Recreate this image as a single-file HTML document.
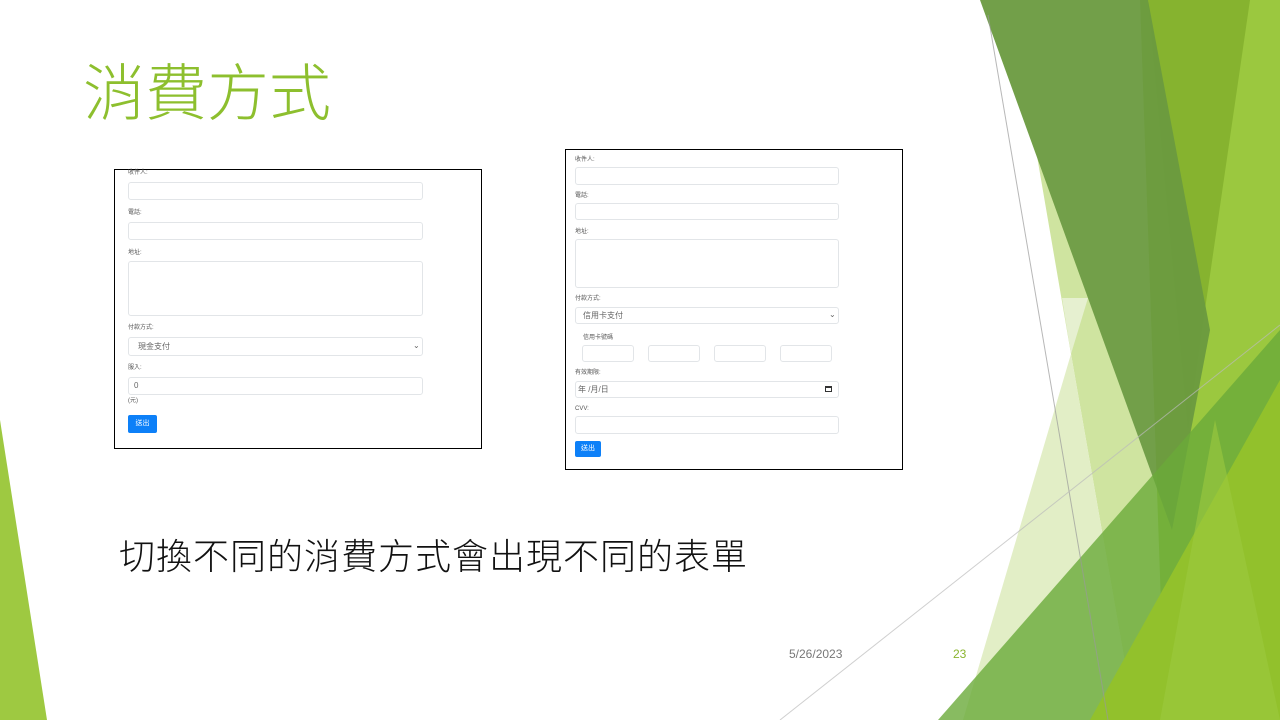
<!DOCTYPE html>
<html><head><meta charset="utf-8"><style>
body{margin:0;width:1280px;height:720px;overflow:hidden;background:#fff;position:relative;font-family:"Liberation Sans","Noto Sans CJK TC",sans-serif}
.a{position:absolute}
.box{position:absolute;border:1px solid #000;background:#fff}
.l{position:absolute;font-size:6px;color:#555;line-height:7px}
.i{position:absolute;border:1px solid #e2e5e8;border-radius:3px;background:#fff;box-sizing:border-box}
.t{position:absolute;font-size:8px;color:#666;line-height:9px}
.b{position:absolute;background:#0d80f8;border-radius:2px;color:#fff;font-size:7px;line-height:18px;text-align:center}
</style></head><body>
<svg class="a" style="left:0;top:0" width="1280" height="720">
<polygon points="0,420 0,720 47,720" fill="#9ec941"/>
<polygon points="1037,156 1172,530 1200,720 1135,720 1071,354" fill="#cfe4a0"/>
<polygon points="1071,354 963,720 1135,720" fill="#e2eec6"/>
<polygon points="1062,298 1088,298 1071,354" fill="#e6f0d0"/>
<polygon points="1140,0 1280,0 1280,720 1165,720" fill="#9bc83f"/>
<polygon points="1148,0 1250,0 1202,330 1188,430" fill="#86b32f"/>
<polygon points="980,0 1148,0 1210,330 1172,530" fill="#6a9a3f" opacity=".95"/>
<polygon points="938,720 1280,330 1280,720" fill="#6aaa3a" opacity=".8"/>
<polygon points="1090,720 1280,380 1280,720" fill="#92c12c"/>
<polygon points="1160,720 1215,420 1280,720" fill="#9cc93f" opacity=".6"/>
<line x1="988" y1="15" x2="1108" y2="720" stroke="#999" stroke-width="1" opacity=".7"/>
<line x1="780" y1="720" x2="1280" y2="325" stroke="#bbb" stroke-width="1" opacity=".7"/>
</svg>
<div class="a" style="left:83px;top:50px;font-size:62px;color:#8dbf2e;font-family:'Noto Sans CJK TC',sans-serif;font-weight:300;line-height:76px">消費方式</div>
<div class="a" style="left:119px;top:530px;font-size:36px;color:#111;font-family:'Noto Sans CJK TC',sans-serif;font-weight:300;line-height:48px;letter-spacing:1px">切換不同的消費方式會出現不同的表單</div>
<div class="a" style="left:789px;top:647px;font-size:12px;color:#777">5/26/2023</div>
<div class="a" style="left:953px;top:647px;font-size:12px;color:#8ab52e">23</div>

<div class="box" style="left:114px;top:169px;width:366px;height:278px"></div>
<div class="l" style="left:128px;top:170px">收件人:</div>
<div class="i" style="left:128px;top:182px;width:295px;height:18px"></div>
<div class="l" style="left:128px;top:210px">電話:</div>
<div class="i" style="left:128px;top:222px;width:295px;height:18px"></div>
<div class="l" style="left:128px;top:250px">地址:</div>
<div class="i" style="left:128px;top:261px;width:295px;height:55px"></div>
<div class="l" style="left:128px;top:325px">付款方式:</div>
<div class="i" style="left:128px;top:337px;width:295px;height:19px"></div>
<div class="t" style="left:138px;top:342px">現金支付</div>
<div class="t" style="left:413px;top:341px">⌄</div>
<div class="l" style="left:128px;top:365px">服入:</div>
<div class="i" style="left:128px;top:377px;width:295px;height:18px"></div>
<div class="t" style="left:134px;top:381px">0</div>
<div class="l" style="left:128px;top:398px">(元)</div>
<div class="b" style="left:128px;top:415px;width:29px;height:18px">送出</div>

<div class="box" style="left:565px;top:149px;width:336px;height:319px"></div>
<div class="l" style="left:575px;top:157px">收件人:</div>
<div class="i" style="left:575px;top:167px;width:264px;height:18px"></div>
<div class="l" style="left:575px;top:193px">電話:</div>
<div class="i" style="left:575px;top:203px;width:264px;height:17px"></div>
<div class="l" style="left:575px;top:229px">地址:</div>
<div class="i" style="left:575px;top:239px;width:264px;height:49px"></div>
<div class="l" style="left:575px;top:296px">付款方式:</div>
<div class="i" style="left:575px;top:307px;width:264px;height:17px"></div>
<div class="t" style="left:583px;top:311px">信用卡支付</div>
<div class="t" style="left:829px;top:310px">⌄</div>
<div class="l" style="left:583px;top:335px">信用卡號碼</div>
<div class="i" style="left:582px;top:345px;width:52px;height:17px"></div>
<div class="i" style="left:648px;top:345px;width:52px;height:17px"></div>
<div class="i" style="left:714px;top:345px;width:52px;height:17px"></div>
<div class="i" style="left:780px;top:345px;width:52px;height:17px"></div>
<div class="l" style="left:575px;top:370px">有效期限:</div>
<div class="i" style="left:575px;top:381px;width:264px;height:17px"></div>
<div class="t" style="left:578px;top:385px">年 /月/日</div>
<div class="a" style="left:825px;top:386px;width:7px;height:6px;border:1px solid #333;border-top-width:2px;box-sizing:border-box"></div>
<div class="l" style="left:575px;top:406px">CVV:</div>
<div class="i" style="left:575px;top:416px;width:264px;height:18px"></div>
<div class="b" style="left:575px;top:441px;width:26px;height:16px;line-height:16px">送出</div>
</body></html>
